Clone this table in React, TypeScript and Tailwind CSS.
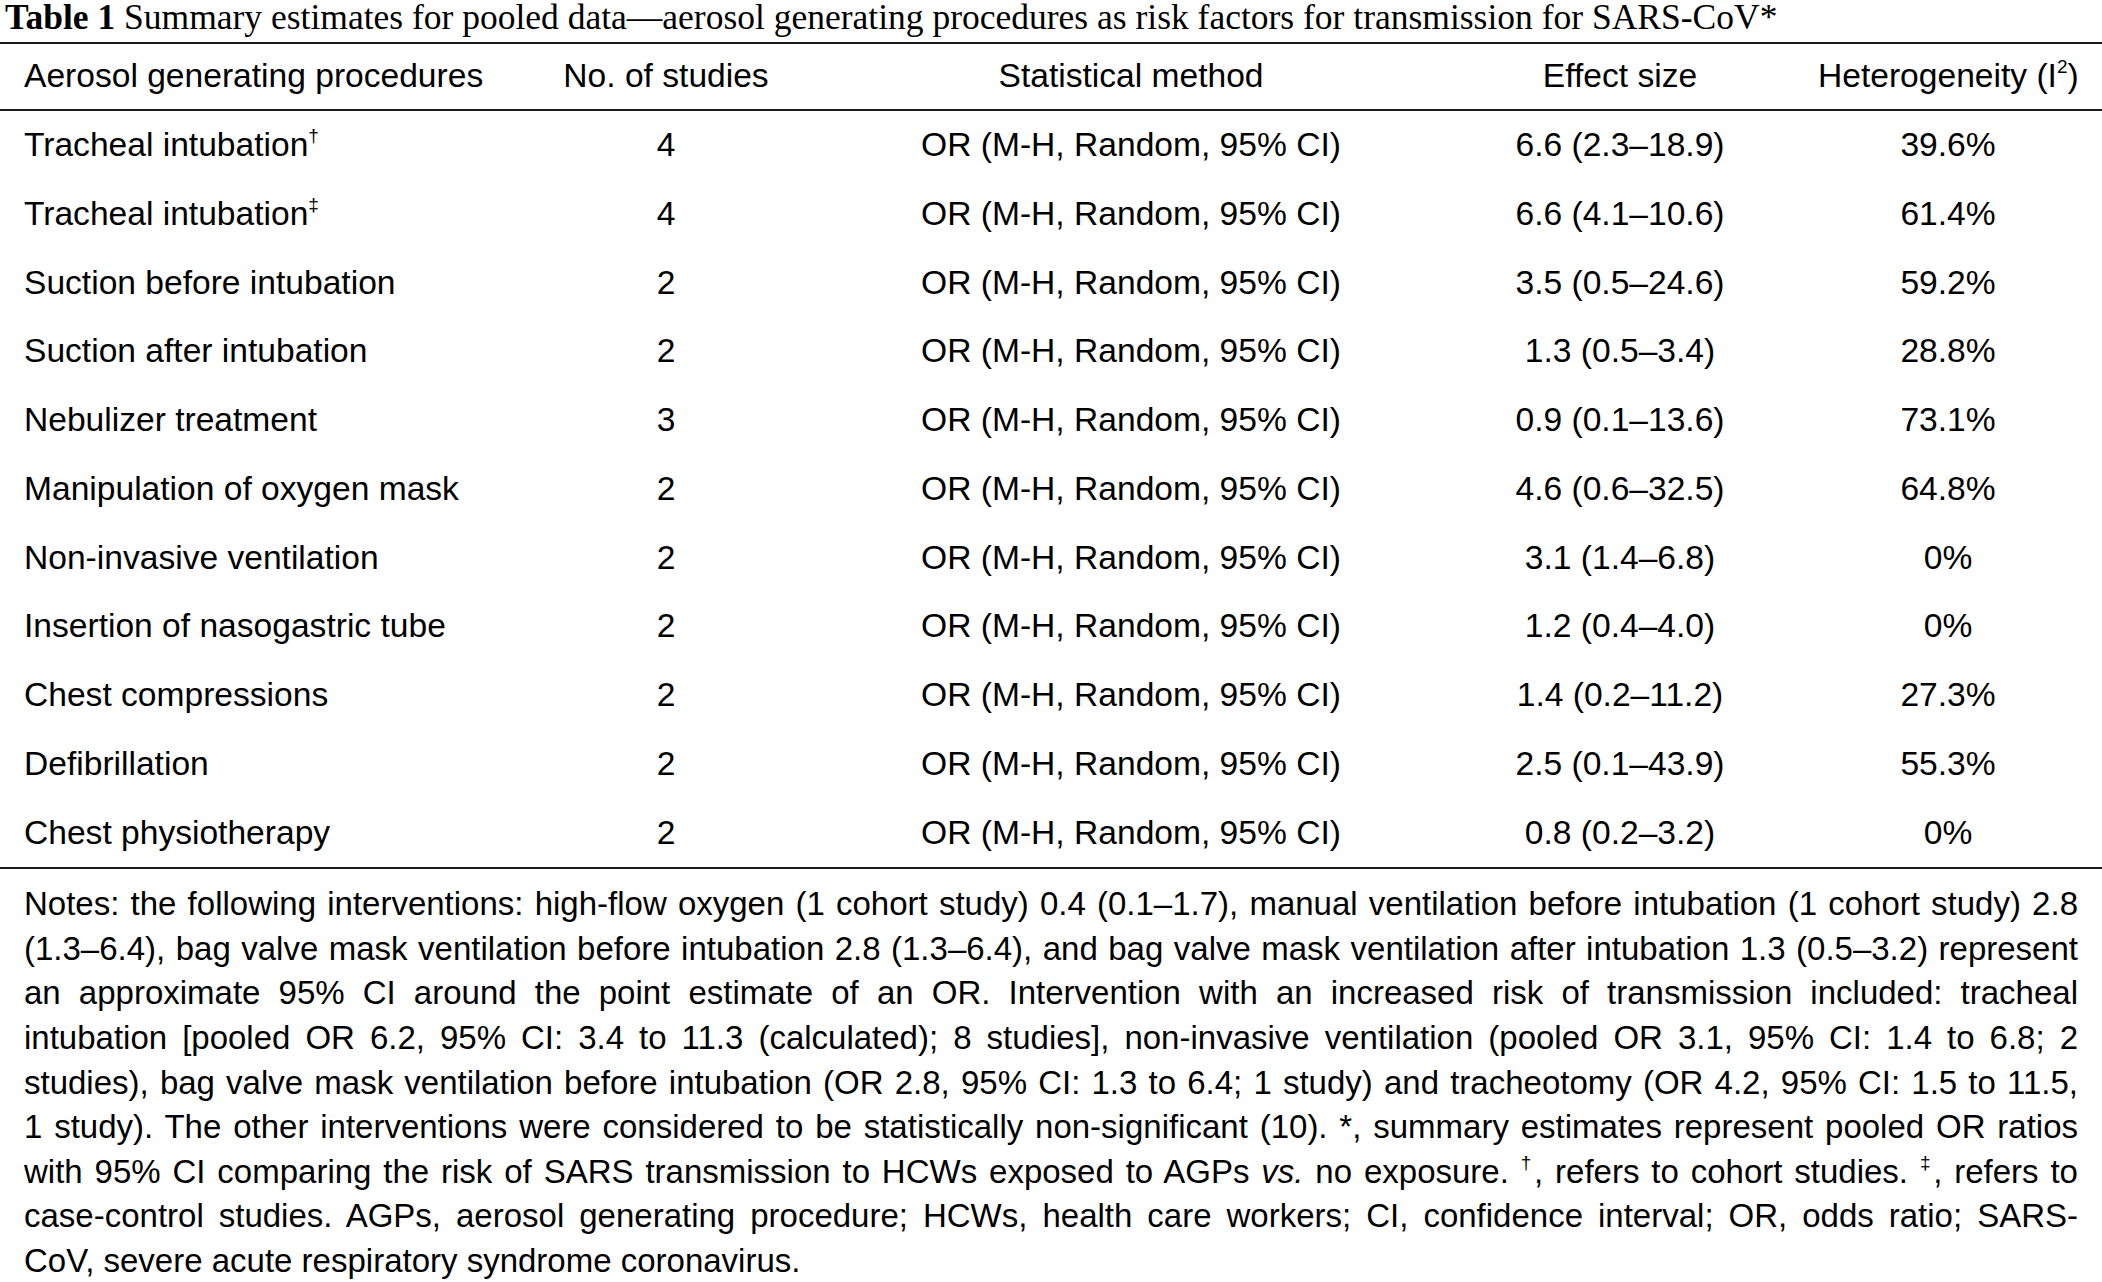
interface Row {
  procedure: string;
  mark?: string;
  studies: number;
  effect: string;
  heterogeneity: string;
}

const rows: Row[] = [
  { procedure: "Tracheal intubation", mark: "†", studies: 4, effect: "6.6 (2.3–18.9)", heterogeneity: "39.6%" },
  { procedure: "Tracheal intubation", mark: "‡", studies: 4, effect: "6.6 (4.1–10.6)", heterogeneity: "61.4%" },
  { procedure: "Suction before intubation", studies: 2, effect: "3.5 (0.5–24.6)", heterogeneity: "59.2%" },
  { procedure: "Suction after intubation", studies: 2, effect: "1.3 (0.5–3.4)", heterogeneity: "28.8%" },
  { procedure: "Nebulizer treatment", studies: 3, effect: "0.9 (0.1–13.6)", heterogeneity: "73.1%" },
  { procedure: "Manipulation of oxygen mask", studies: 2, effect: "4.6 (0.6–32.5)", heterogeneity: "64.8%" },
  { procedure: "Non-invasive ventilation", studies: 2, effect: "3.1 (1.4–6.8)", heterogeneity: "0%" },
  { procedure: "Insertion of nasogastric tube", studies: 2, effect: "1.2 (0.4–4.0)", heterogeneity: "0%" },
  { procedure: "Chest compressions", studies: 2, effect: "1.4 (0.2–11.2)", heterogeneity: "27.3%" },
  { procedure: "Defibrillation", studies: 2, effect: "2.5 (0.1–43.9)", heterogeneity: "55.3%" },
  { procedure: "Chest physiotherapy", studies: 2, effect: "0.8 (0.2–3.2)", heterogeneity: "0%" }
];

const grid = "grid grid-cols-[492px_348px_582px_396px_1fr] whitespace-nowrap";

function Sup({ children }: { children: React.ReactNode }) {
  return <sup className="text-[19px] -top-[0.75em]">{children}</sup>;
}

function Justified({ children }: { children: React.ReactNode }) {
  return <div className="text-justify [text-align-last:justify]">{children}</div>;
}

export default function App() {
  return (
    <div className="w-[2102px] h-[1282px] overflow-hidden bg-white text-black font-['Liberation_Sans',Arial,sans-serif]">
      <div className="h-[42px] pl-[5px] font-['Liberation_Serif','Times_New_Roman',serif] text-[35.5px] leading-[34px] whitespace-nowrap">
        <span className="font-bold">Table 1</span> Summary estimates for pooled data—aerosol generating
        procedures as risk factors for transmission for SARS-CoV*
      </div>

      <div className="border-t-2 border-b-2 border-[#1a1a1a] text-[33.6px]">
        <div className={`${grid} h-[67px] items-center border-b-2 border-[#1a1a1a]`}>
          <div className="pl-[24px]">Aerosol generating procedures</div>
          <div className="text-center">No. of studies</div>
          <div className="text-center">Statistical method</div>
          <div className="text-center">Effect size</div>
          <div className="text-center pr-[24px]">
            Heterogeneity (I<Sup>2</Sup>)
          </div>
        </div>

        {rows.map((row, index) => (
          <div key={index} className={`${grid} h-[68.75px] items-center`}>
            <div className="pl-[24px]">
              {row.procedure}
              {row.mark && <Sup>{row.mark}</Sup>}
            </div>
            <div className="text-center">{row.studies}</div>
            <div className="text-center">OR (M-H, Random, 95% CI)</div>
            <div className="text-center">{row.effect}</div>
            <div className="text-center pr-[24px]">{row.heterogeneity}</div>
          </div>
        ))}
      </div>

      <div className="px-[24px] pt-[13px] text-[33px] leading-[44.6px]">
        <Justified>
          Notes: the following interventions: high-flow oxygen (1 cohort study) 0.4 (0.1–1.7), manual ventilation
          before intubation (1 cohort study) 2.8
        </Justified>
        <Justified>
          (1.3–6.4), bag valve mask ventilation before intubation 2.8 (1.3–6.4), and bag valve mask ventilation after
          intubation 1.3 (0.5–3.2) represent
        </Justified>
        <Justified>
          an approximate 95% CI around the point estimate of an OR. Intervention with an increased risk of
          transmission included: tracheal
        </Justified>
        <Justified>
          intubation [pooled OR 6.2, 95% CI: 3.4 to 11.3 (calculated); 8 studies], non-invasive ventilation (pooled
          OR 3.1, 95% CI: 1.4 to 6.8; 2
        </Justified>
        <Justified>
          studies), bag valve mask ventilation before intubation (OR 2.8, 95% CI: 1.3 to 6.4; 1 study) and
          tracheotomy (OR 4.2, 95% CI: 1.5 to 11.5,
        </Justified>
        <Justified>
          1 study). The other interventions were considered to be statistically non-significant (10). *, summary
          estimates represent pooled OR ratios
        </Justified>
        <Justified>
          with 95% CI comparing the risk of SARS transmission to HCWs exposed to AGPs <i>vs.</i> no exposure.{" "}
          <Sup>†</Sup>, refers to cohort studies. <Sup>‡</Sup>, refers to
        </Justified>
        <Justified>
          case-control studies. AGPs, aerosol generating procedure; HCWs, health care workers; CI, confidence
          interval; OR, odds ratio; SARS-
        </Justified>
        <div>CoV, severe acute respiratory syndrome coronavirus.</div>
      </div>
    </div>
  );
}
